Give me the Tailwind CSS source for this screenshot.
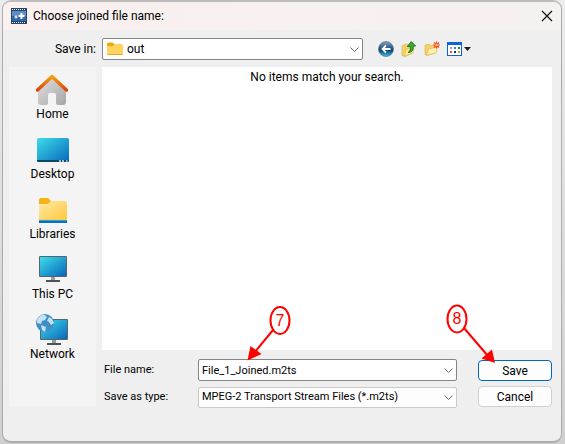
<!DOCTYPE html>
<html lang="en">
<head>
<meta charset="utf-8">
<meta name="viewport" content="width=device-width, initial-scale=1">
<title>Choose joined file name:</title>
<script src="https://cdn.jsdelivr.net/npm/@tailwindcss/browser@4"></script>
</head>
<body class="bg-linear-to-b from-[#ececec] to-[#cfcfcf] font-[Roboto,'Noto_Sans',sans-serif] text-xs text-black">
<div class="flex h-screen min-h-[400px] flex-col pr-[3px] pb-px pl-[2px]">
<main class="flex flex-1 flex-col overflow-hidden rounded-[9px] border border-t-2 border-b-2 border-[#acacac] border-t-[#bcbcbc] bg-[#efefef]">
  <header class="flex h-7 shrink-0 items-center gap-[6px] bg-linear-to-r from-[#f9f0ef] to-[#f5f1f0] pr-[6px] pl-2">
    <svg class="size-4 shrink-0" viewBox="0 0 16 16" aria-hidden="true">
      <rect width="16" height="16" fill="#28456f"/>
      <path d="M1 1.500h14M1 14.500h14" stroke="#fff" stroke-width="1" stroke-dasharray="1 1"/>
      <rect x="1" y="3" width="14" height="10" fill="#5d8cc9"/>
      <path d="M1 8h14v5H1z" fill="#3467ac"/>
      <path d="M10.500 5v6M7.500 8h6" stroke="#fff" stroke-width="2"/>
      <path d="M5 7.500v3M3.500 9h3" stroke="#fff" stroke-width="1.200"/>
    </svg>
    <h1 class="flex-1 whitespace-nowrap">Choose joined file name:</h1>
    <button type="button" aria-label="Close" class="flex size-4 items-center justify-center">
      <svg class="size-3" viewBox="0 0 12 12" fill="none" stroke="#111" stroke-width="1.200" aria-hidden="true"><path d="M1 1l10 10M11 1L1 11"/></svg>
    </button>
  </header>

  <div class="flex items-center pt-2 pb-[7px] pl-[6px]">
    <label for="folder" class="w-[87px] shrink-0 text-right">Save in:</label>
    <div class="relative ml-[6px] w-[261px] shrink-0">
      <select id="folder" class="block h-[22px] w-full appearance-none rounded-xs border border-[#858585] bg-white pl-6 leading-5"><option>out</option></select>
      <svg class="pointer-events-none absolute top-1 left-[5px] h-[14px] w-4" viewBox="0 0 16 14" aria-hidden="true">
        <path d="M0 2Q0 .5 1.500 .5h4L7.500 2v4H0z" fill="#eea80c"/><path d="M0 4h6l2-2h6.500Q16 2 16 3.500v8Q16 13 14.500 13h-13Q0 13 0 11.500z" fill="#ffd45e"/><path d="M.5 12.500h15" stroke="#e7a926"/>
      </svg>
      <svg class="pointer-events-none absolute top-[9px] right-1 h-[6px] w-[9px]" viewBox="0 0 9 6" fill="none" stroke="#666" aria-hidden="true"><path d="M.5 .5l4 4 4-4"/></svg>
    </div>
    <nav aria-label="Folder tools" class="ml-[15px] flex items-center gap-[7px]">
      <button type="button" aria-label="Back">
        <svg class="size-4" viewBox="0 0 16 16" aria-hidden="true">
          <defs><linearGradient id="ball" x2="0" y2="1"><stop stop-color="#8aa3bd"/><stop offset=".45" stop-color="#1f5488"/><stop offset=".6" stop-color="#124479"/><stop offset="1" stop-color="#35c5e9"/></linearGradient></defs>
          <circle cx="8" cy="8" r="7.500" fill="url(#ball)" stroke="#55718f" stroke-width=".7"/>
          <path d="M12.500 8H5M8 4.500L4.500 8 8 11.500" fill="none" stroke="#fff" stroke-width="1.800"/>
        </svg>
      </button>
      <button type="button" aria-label="Up one level">
        <svg class="size-4" viewBox="0 0 16 16" aria-hidden="true">
          <path d="M1 5l4-2 2 1 4-1v9l-7 3.500-3-1z" fill="#f3d468" stroke="#d4ab3f" stroke-width=".6"/>
          <path d="M3.500 15.300L5 8l8-2-1 6z" fill="#ffe98f" stroke="#d8b048" stroke-width=".6"/>
          <path d="M7 11.500c2-1 2.500-3 2.200-6H6.300L10.300 .5l4.400 4.500-2.600.3c.4 4-1 6-4.700 6.200z" fill="#35ad32" stroke="#16691b" stroke-width=".8"/>
        </svg>
      </button>
      <button type="button" aria-label="Create new folder">
        <svg class="size-4" viewBox="0 0 16 16" aria-hidden="true">
          <path d="M1 4l4-1 2 1.500L11 4v8l-8 2.500-2-1z" fill="#f4d369" stroke="#d8ae48" stroke-width=".6"/>
          <path d="M2.500 14.300L4.500 8l9-2-1.500 6z" fill="#ffefad" stroke="#d8b04e" stroke-width=".6"/>
          <path d="M12.500 .5v7M9 4h7M10 1.500l5 5M15 1.500l-5 5" stroke="#f4481d" stroke-width="1.100"/><circle cx="12.500" cy="4" r="1.300" fill="#ffc46b"/>
        </svg>
      </button>
      <button type="button" aria-label="View menu" class="flex items-center gap-[2px]">
        <svg class="h-[14px] w-[15px]" viewBox="0 0 15 14" aria-hidden="true">
          <rect x=".5" y=".5" width="14" height="13" fill="#fff" stroke="#0a66d8"/><path d="M0 0h15v3H0z" fill="#0a66d8"/>
          <path d="M3 5h2v2H3z" fill="#a7a0cb"/><path d="M7 5h2v2H7z" fill="#5676c8"/><path d="M11 5h2v2h-2z" fill="#169036"/><path d="M3 9h2v2H3z" fill="#e8552c"/><path d="M7 9h2v2H7z" fill="#102a94"/><path d="M11 9h2v2h-2z" fill="#d1a322"/>
        </svg>
        <svg class="h-1 w-[7px]" viewBox="0 0 7 4" aria-hidden="true"><path d="M0 0h7L3.500 4z" fill="#1c1c1c"/></svg>
      </button>
    </nav>
  </div>

  <div class="flex flex-1 gap-[6px] pr-[9px] pl-[6px]">
    <nav aria-label="Places" class="mb-[35px] flex w-[87px] shrink-0 flex-col items-center bg-[#f4f4f4] pt-[7px]">
      <a href="#home" class="flex h-[60px] flex-col items-center">
        <svg class="size-8 shrink-0" viewBox="0 0 32 32" aria-hidden="true">
          <defs><linearGradient id="wall" x2="1" y2="1"><stop stop-color="#e2e2e2"/><stop offset="1" stop-color="#a5a5a5"/></linearGradient><linearGradient id="roof" x2="0" y2="1"><stop stop-color="#f6a00f"/><stop offset="1" stop-color="#dc4310"/></linearGradient></defs>
          <path d="M2 15L16 3l14 12v13q0 3-3 3h-5q-2 0-2-2v-8q0-2-2-2h-4q-2 0-2 2v8q0 2-2 2H5q-3 0-3-3z" fill="url(#wall)"/>
          <path d="M1.500 16L16 2.500 30.500 16" fill="none" stroke="url(#roof)" stroke-width="3.400" stroke-linejoin="round" stroke-linecap="round"/>
        </svg>
        <span class="leading-4">Home</span>
      </a>
      <a href="#desktop" class="flex h-[60px] flex-col items-center">
        <svg class="size-8 shrink-0" viewBox="0 0 32 32" aria-hidden="true">
          <defs><linearGradient id="screen" x2="1" y2="1"><stop stop-color="#3cddea"/><stop offset="1" stop-color="#0967ba"/></linearGradient></defs>
          <rect y="4" width="32" height="24" rx="1.500" fill="url(#screen)"/><path d="M0 26h32v.5q0 1.500-1.500 1.500h-29Q0 28 0 26.500z" fill="#0b4769"/><path d="M22 27h2m1 0h2m2 0h1.500" stroke="#d6e7ef" stroke-width="1.500"/>
        </svg>
        <span class="leading-4">Desktop</span>
      </a>
      <a href="#libraries" class="flex h-[60px] flex-col items-center">
        <svg class="size-8 shrink-0" viewBox="0 0 32 32" aria-hidden="true">
          <defs><linearGradient id="folderFill" x2="1" y2="1"><stop stop-color="#ffe9a8"/><stop offset="1" stop-color="#ffc83b"/></linearGradient></defs>
          <path d="M2 6q0-2 2-2h7l3 3v6H2z" fill="#f5b417"/><path d="M2 10h9l3-3h14q2 0 2 2v17H2z" fill="url(#folderFill)"/><path d="M2 25.500h28" stroke="#f5ce66"/><path d="M2 26h28v3H2z" fill="#0d6fb8"/><path d="M2 26h28v1H2z" fill="#2e9fe0"/>
        </svg>
        <span class="leading-4">Libraries</span>
      </a>
      <a href="#this-pc" class="flex h-[60px] flex-col items-center">
        <svg class="size-8 shrink-0" viewBox="0 0 32 32" aria-hidden="true">
          <path d="M14 21h4v6h-4z" fill="#959ba0"/><path d="M9 26h14v2H9z" fill="#4b535a"/><rect x="2" y="2" width="28" height="21" rx="1" fill="#59636b"/><rect x="3" y="3" width="26" height="19" fill="url(#screen)"/>
        </svg>
        <span class="leading-4">This PC</span>
      </a>
      <a href="#network" class="flex h-[60px] flex-col items-center">
        <svg class="size-8 shrink-0" viewBox="0 0 32 32" aria-hidden="true">
          <path d="M16 26h4v4h-4z" fill="#959ba0"/><path d="M11 29h14v2H11z" fill="#4b535a"/><rect x="4" y="5" width="28" height="21" rx="1" fill="#59636b"/><rect x="5" y="6" width="26" height="19" fill="url(#screen)"/>
          <circle cx="9" cy="9" r="9" fill="#3d8fc6"/><path d="M2 4Q5 0 9 1l2 2-2 3-3 1-1 3-4-1Q0 6 2 4zM5 11l5 2-1 5-3-2zM13 3l3 2 2 4-3 2-2-3-2-1z" fill="#c4e2f1"/>
        </svg>
        <span class="leading-4">Network</span>
      </a>
    </nav>

    <div class="flex min-w-0 flex-1 flex-col">
      <section aria-label="Files" class="flex-1 bg-white pt-[2px] text-center leading-4">No items match your search.</section>
      <form class="flex justify-between pt-[9px] pb-[33px] pl-[2px] text-[11px]" onsubmit="return false">
        <div class="grid flex-1 grid-cols-[94px_1fr] items-center gap-y-[6px]">
          <label for="filename">File name:</label>
          <div class="relative">
            <input id="filename" type="text" value="File_1_Joined.m2ts" class="block h-[22px] w-full rounded-xs border border-[#858585] bg-white pr-5 pl-[3px]">
            <button type="button" aria-label="Recent names" class="absolute top-[9px] right-1"><svg class="h-[6px] w-[9px]" viewBox="0 0 9 6" fill="none" stroke="#666" aria-hidden="true"><path d="M.5 .5l4 4 4-4"/></svg></button>
            <svg class="pointer-events-none absolute -top-[54px] left-[46px] h-[56px] w-[48px] font-['Liberation_Sans',Arial,sans-serif]" viewBox="0 0 48 56" aria-hidden="true">
              <ellipse cx="36" cy="15.500" rx="9.500" ry="13.500" fill="none" stroke="#f00" stroke-width="2"/>
              <text x="36" y="21" text-anchor="middle" font-size="16" fill="#f00">7</text>
              <path d="M29 25L10 48" stroke="#f00" stroke-width="2"/><path d="M3.500 55.500L6.500 41l11 8z" fill="#f00"/>
            </svg>
          </div>
          <label for="filetype">Save as type:</label>
          <div class="relative">
            <select id="filetype" class="block h-[21px] w-full appearance-none rounded-xs border border-[#c9c9c9] bg-[#fdfdfd] pl-[3px]"><option>MPEG-2 Transport Stream Files (*.m2ts)</option></select>
            <svg class="pointer-events-none absolute top-2 right-1 h-[6px] w-[9px]" viewBox="0 0 9 6" fill="none" stroke="#666" aria-hidden="true"><path d="M.5 .5l4 4 4-4"/></svg>
          </div>
        </div>
        <div class="relative ml-[21px] flex w-[74px] shrink-0 flex-col gap-[5px] pt-px text-xs">
          <button type="submit" class="h-[21px] rounded-sm border border-[#0067c0] bg-[#fdfdfd]">Save</button>
          <button type="button" class="h-[21px] rounded-sm border border-[#d0d0d0] bg-[#fdfdfd]">Cancel</button>
          <svg class="pointer-events-none absolute -top-[55px] -left-[33px] h-[60px] w-[52px] font-['Liberation_Sans',Arial,sans-serif]" viewBox="0 0 52 60" aria-hidden="true">
            <ellipse cx="12" cy="15" rx="9.500" ry="13.500" fill="none" stroke="#f00" stroke-width="2"/>
            <text x="12" y="20" text-anchor="middle" font-size="16" fill="#f00">8</text>
            <path d="M19 24L43 52" stroke="#f00" stroke-width="2"/><path d="M50 59L36.500 54.500 47 45.500z" fill="#f00"/>
          </svg>
        </div>
      </form>
    </div>
  </div>
</main>
</div>
</body>
</html>
